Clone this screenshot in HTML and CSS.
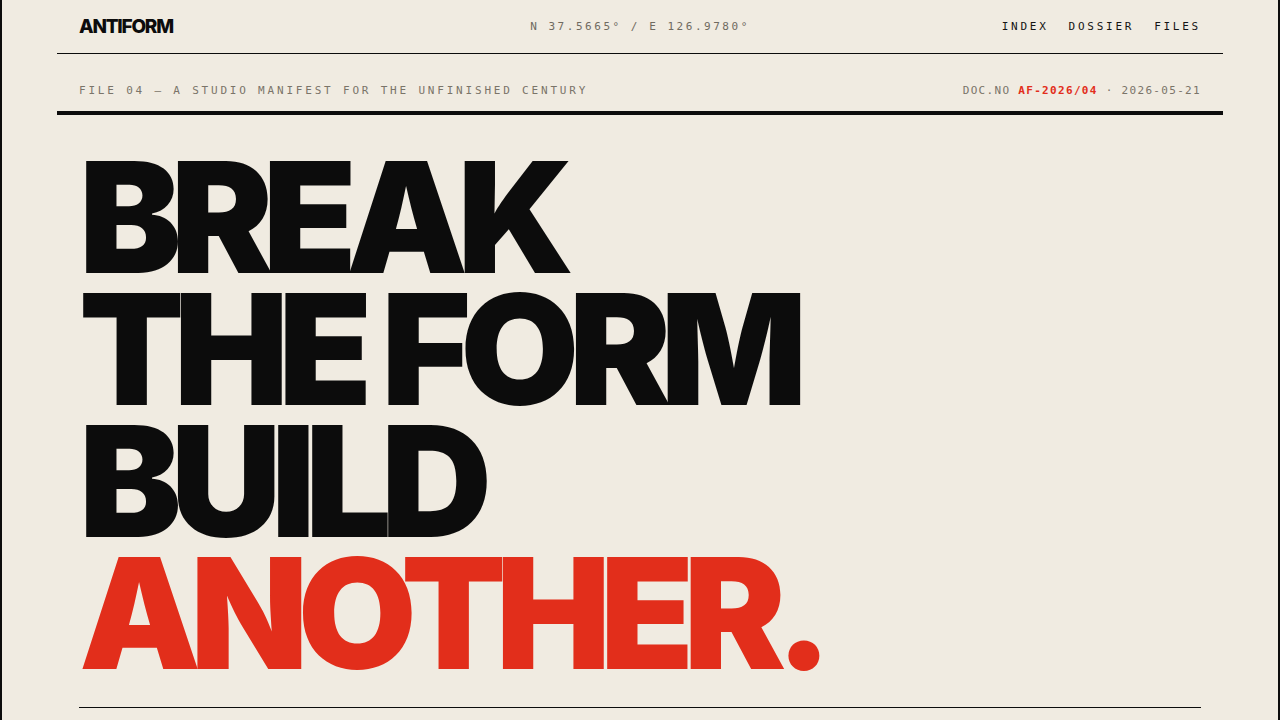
FILE: index.html
```html
<!DOCTYPE html>
<html lang="en">
<head>
<meta charset="utf-8">
<title>ANTIFORM — File 04</title>
<link rel="stylesheet" href="styles.css">
</head>
<body>
<div class="frame">
  <header class="topbar">
    <div class="logo">ANTIFORM</div>
    <div class="coords">N 37.5665° / E 126.9780°</div>
    <nav class="nav">
      <a href="#">INDEX</a>
      <a href="#">DOSSIER</a>
      <a href="#">FILES</a>
    </nav>
  </header>
  <div class="meta">
    <div class="meta-left">FILE 04 — A STUDIO MANIFEST FOR THE UNFINISHED CENTURY</div>
    <div class="meta-right">DOC.NO <span class="red">AF-2026/04</span> · 2026-05-21</div>
  </div>
  <main class="hero">
    <h1 class="title">
      <span class="line">BREAK</span>
      <span class="line">THE FORM</span>
      <span class="line">BUILD</span>
      <span class="line accent">ANOTHER.</span>
    </h1>
    <div class="rule"></div>
  </main>
</div>
</body>
</html>
```

FILE: styles.css
```css
* { box-sizing: border-box; margin: 0; padding: 0; }

html, body {
  background: #f0ebe1;
}

body {
  border-left: 2px solid #0c0c0c;
  border-right: 2px solid #0c0c0c;
  min-height: 100vh;
  color: #0c0c0c;
  font-family: "DejaVu Sans Mono", "Liberation Mono", monospace;
}

.frame {
  padding: 0 55px;
}

.topbar {
  height: 54px;
  border-bottom: 1px solid #0c0c0c;
  padding: 0 22px;
  display: grid;
  grid-template-columns: 1fr auto 1fr;
  align-items: center;
}

.logo {
  font-family: Inter, "Noto Sans", sans-serif;
  font-weight: 800;
  font-size: 19px;
  letter-spacing: -0.065em;
  color: #0c0c0c;
}

.coords {
  font-size: 11px;
  letter-spacing: 0.23em;
  color: #6f6a60;
}

.nav {
  display: flex;
  justify-content: flex-end;
  gap: 20px;
}

.nav a {
  font-size: 11px;
  letter-spacing: 0.25em;
  color: #141414;
  text-decoration: none;
}

.meta {
  display: flex;
  justify-content: space-between;
  align-items: center;
  padding: 30px 22px 14px;
  border-bottom: 4px solid #0c0c0c;
  font-size: 11px;
  color: #7a7469;
  line-height: 13px;
}

.meta-left {
  letter-spacing: 0.255em;
}

.meta-right {
  letter-spacing: 0.12em;
}

.meta .red {
  color: #e22e1b;
  font-weight: bold;
}

.hero {
  padding: 36px 22px 0;
}

.title {
  font-family: Inter, "Noto Sans", sans-serif;
  font-weight: 900;
  font-size: 153.6px;
  line-height: 0.86;
  letter-spacing: -0.07em;
  color: #0c0c0c;
}

.title .line {
  display: block;
  white-space: nowrap;
}

.title .accent {
  color: #e22e1b;
}

.rule {
  margin-top: 28px;
  height: 1px;
  background: #0c0c0c;
}
```
